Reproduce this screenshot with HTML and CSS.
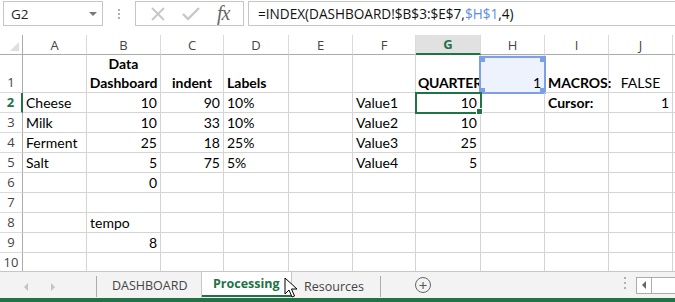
FILE: index.html
```html
<!DOCTYPE html>
<html lang="en">
<head>
    <meta charset="UTF-8">
    <title>Processing - Workbook</title>
    <link rel="stylesheet" href="styles.css">
</head>
<body>

<div class="formula-bar">
    <div class="name-box">
        <span>G2</span>
        <span class="name-arrow"></span>
    </div>
    <div class="grip"><i></i><i></i><i></i></div>
    <div class="fx-box">
        <svg class="fx-icon" width="16" height="16" viewBox="0 0 16 16">
            <path d="M2 2 L14 14 M14 2 L2 14" stroke="#c8c8c8" stroke-width="2" fill="none"/>
        </svg>
        <svg class="fx-icon" width="20" height="16" viewBox="0 0 20 16">
            <path d="M2 8 L7 13 L18 2" stroke="#c8c8c8" stroke-width="2.4" fill="none"/>
        </svg>
        <span class="fx-label">fx</span>
    </div>
    <div class="formula-input">=INDEX(DASHBOARD!$B$3:$E$7,<span class="ref">$H$1</span>,4)</div>
</div>

<div class="sheet" id="sheet">
    <!-- cells are built by the script below -->
</div>

<div class="tab-bar">
    <div class="tab-nav">
        <span class="nav-left"></span>
        <span class="nav-right"></span>
    </div>
    <div class="tab">DASHBOARD</div>
    <div class="tab active">Processing</div>
    <div class="tab last">Resources</div>
    <div class="add-sheet">+</div>
    <div class="tab-spacer"></div>
    <div class="grip small"><i></i><i></i><i></i></div>
    <div class="hscroll">
        <span class="hscroll-btn"><span class="nav-left dark"></span></span>
        <span class="hscroll-track"></span>
    </div>
    <svg class="pointer" width="14" height="22" viewBox="0 0 14 22">
        <path d="M1 1 L1 17 L5 13 L8 20 L10.5 19 L7.5 12 L13 12 Z" fill="#fff" stroke="#000" stroke-width="1"/>
    </svg>
</div>
<div class="status-bar"></div>

<script>
    // K is only a sliver at the right edge, its letter is out of view
    const cols = ['A', 'B', 'C', 'D', 'E', 'F', 'G', 'H', 'I', 'J', 'K'];

    // sheet content, row by row
    const rows = [
        { B: 'Data Dashboard', C: 'indent', D: 'Labels', G: 'QUARTER', H: '1', I: 'MACROS:', J: 'FALSE' },
        { A: 'Cheese', B: '10', C: '90', D: '10%', F: 'Value1', G: '10', I: 'Cursor:', J: '1' },
        { A: 'Milk', B: '10', C: '33', D: '10%', F: 'Value2', G: '10' },
        { A: 'Ferment', B: '25', C: '18', D: '25%', F: 'Value3', G: '25' },
        { A: 'Salt', B: '5', C: '75', D: '5%', F: 'Value4', G: '5' },
        { B: '0' },
        {},
        { B: 'tempo' },
        { B: '8' },
        {}
    ];

    // extra classes for formatted cells
    const formats = {
        B1: 'bold center wrap',
        C1: 'bold indent',
        D1: 'bold',
        G1: 'bold tight',
        I1: 'bold',
        J1: 'center',
        I2: 'bold',
        H1: 'ref-range',
        G2: 'active'
    };

    function addCell(sheet, cls, text) {
        const cell = document.createElement('div');
        cell.className = cls;
        if (text) {
            const span = document.createElement('span');
            span.textContent = text;
            cell.appendChild(span);
        }
        sheet.appendChild(cell);
    }

    function buildSheet() {
        const sheet = document.getElementById('sheet');

        addCell(sheet, 'corner', '');
        cols.forEach(c => {
            const label = c === 'K' ? '' : c;
            addCell(sheet, 'col-head' + (c === 'G' ? ' selected' : ''), label);
        });

        rows.forEach((row, i) => {
            const n = i + 1;
            addCell(sheet, 'row-head' + (n === 2 ? ' selected' : ''), String(n));
            cols.forEach(c => {
                const value = row[c] || '';
                let cls = 'cell';
                if (/^\d+$/.test(value)) cls += ' num';
                if (formats[c + n]) cls += ' ' + formats[c + n];
                addCell(sheet, cls, value);
            });
        });
    }

    buildSheet();
</script>

</body>
</html>
```

FILE: styles.css
```css
body {
    margin: 0;
    width: 675px;
    height: 302px;
    overflow: hidden;
    background-color: #fff;
    font-family: 'Open Sans', 'Noto Sans', sans-serif;
    position: relative;
}

/* formula bar */

.formula-bar {
    height: 35px;
    display: flex;
    align-items: flex-start;
    padding-top: 1px;
    box-sizing: border-box;
}

.name-box {
    margin-left: 3px;
    width: 100px;
    height: 25px;
    border: 1px solid #c6c6c6;
    box-sizing: border-box;
    display: flex;
    align-items: center;
    justify-content: space-between;
    padding: 0 5px 0 7px;
    font-size: 13.5px;
    color: #222;
}

.name-arrow {
    width: 0;
    height: 0;
    border-left: 4px solid transparent;
    border-right: 4px solid transparent;
    border-top: 4px solid #777;
}

.grip {
    width: 32px;
    height: 25px;
    display: flex;
    flex-direction: column;
    align-items: center;
    justify-content: center;
    gap: 2px;
}

.grip i {
    width: 2px;
    height: 2px;
    background-color: #b0b0b0;
}

.fx-box {
    width: 109px;
    height: 25px;
    border: 1px solid #c6c6c6;
    box-sizing: border-box;
    display: flex;
    align-items: center;
    padding-left: 14px;
    gap: 15px;
}

.fx-label {
    font-family: 'Liberation Serif', serif;
    font-style: italic;
    font-size: 20px;
    color: #666;
    margin-left: 1px;
    letter-spacing: -1px;
}

.formula-input {
    flex: 1;
    margin-left: 4px;
    height: 25px;
    border: 1px solid #c6c6c6;
    border-right: none;
    box-sizing: border-box;
    padding-left: 9px;
    font-size: 13.6px;
    line-height: 23px;
    color: #111;
}

.formula-input .ref {
    color: #5d8ee0;
}

/* grid */

.sheet {
    display: grid;
    grid-template-columns: 23px 64px 74px 63px 65px 64px 63px 65px 64px 64px 64px 64px;
    grid-template-rows: 20px 38px repeat(9, 20px);
    height: 236px;
    overflow: hidden;
    font-family: 'Lato', 'Open Sans', sans-serif;
    font-size: 14px;
    color: #000;
}

.sheet > div {
    box-sizing: border-box;
    position: relative;
    overflow: visible;
    white-space: nowrap;
}

.corner {
    border-right: 1px solid #ababab;
    border-bottom: 1px solid #ababab;
}

.corner::after {
    content: '';
    position: absolute;
    right: 3px;
    bottom: 3px;
    border-left: 9px solid transparent;
    border-bottom: 9px solid #dfdfdf;
}

.col-head,
.row-head {
    font-family: 'Open Sans', 'Noto Sans', sans-serif;
    font-size: 13px;
    color: #444;
    display: flex;
    align-items: center;
    justify-content: center;
}

.col-head {
    border-right: 1px solid #dadada;
    border-bottom: 1px solid #ababab;
}

.row-head {
    border-right: 1px solid #ababab;
    border-bottom: 1px solid #dadada;
    align-items: flex-end;
    padding-bottom: 1px;
}

.col-head.selected {
    background-color: #e1e1e1;
    color: #217346;
    font-weight: bold;
    border-bottom: 2px solid #217346;
}

.row-head.selected {
    color: #217346;
    font-weight: bold;
    border-right: 2px solid #217346;
}

.cell {
    border-right: 1px solid #d4d4d4;
    border-bottom: 1px solid #d4d4d4;
    display: flex;
    align-items: flex-end;
    padding: 0 3px 0 3px;
    line-height: 19px;
}

.cell.num {
    justify-content: flex-end;
}

.cell.bold {
    font-weight: bold;
}

.cell.center {
    justify-content: center;
    text-align: center;
}

.cell.wrap {
    white-space: normal;
}

.cell.indent {
    padding-left: 11px;
}

.cell.tight {
    padding: 0 1px 0 2px;
    letter-spacing: -0.2px;
}

.cell.active {
    outline: 2px solid #217346;
    outline-offset: -1px;
    z-index: 2;
}

.cell.active::after {
    content: '';
    position: absolute;
    right: -3px;
    bottom: -3px;
    width: 5px;
    height: 5px;
    background-color: #217346;
    border: 1px solid #fff;
}

.cell.ref-range {
    background-color: #eef2fc;
}

.cell.ref-range::before {
    content: '';
    position: absolute;
    left: -2px;
    top: 1px;
    right: -2px;
    bottom: -2px;
    border: 2px solid #7ba0e8;
    box-sizing: border-box;
    background:
        linear-gradient(#7ba0e8, #7ba0e8) left top / 4px 4px no-repeat,
        linear-gradient(#7ba0e8, #7ba0e8) right top / 4px 4px no-repeat,
        linear-gradient(#7ba0e8, #7ba0e8) left bottom / 4px 4px no-repeat,
        linear-gradient(#7ba0e8, #7ba0e8) right bottom / 4px 4px no-repeat;
}

.cell.ref-range span {
    position: relative;
}

/* sheet tabs */

.tab-bar {
    height: 26px;
    border-top: 1px solid #c6c6c6;
    background-color: #f3f3f3;
    display: flex;
    align-items: stretch;
    position: relative;
    font-size: 12.5px;
    color: #444;
}

.tab-nav {
    width: 97px;
    border-right: 1px solid #ababab;
    margin: 4px 0 1px 0;
    display: flex;
    align-items: center;
    padding-left: 24px;
    gap: 23px;
    box-sizing: border-box;
}

.nav-left,
.nav-right {
    width: 0;
    height: 0;
    border-top: 4px solid transparent;
    border-bottom: 4px solid transparent;
}

.nav-left {
    border-right: 4px solid #c4c4c4;
}

.nav-right {
    border-left: 4px solid #c4c4c4;
}

.nav-left.dark {
    border-right-color: #666;
}

.tab {
    padding: 0 15px 0 15px;
    display: flex;
    align-items: center;
    border-right: 1px solid #c6c6c6;
    width: 105px;
    box-sizing: border-box;
}

.tab.active {
    background-color: #fff;
    color: #217346;
    font-weight: bold;
    width: 90px;
    padding: 0 0 0 11px;
    border-bottom: 2px solid #217346;
    margin-bottom: 1px;
}

.tab.last {
    width: 89px;
    padding: 0 0 0 12px;
    border-right: 1px solid #ababab;
    margin: 4px 0 1px 0;
}

.add-sheet {
    width: 14px;
    height: 14px;
    margin: 5px 0 0 34px;
    border: 1px solid #666;
    border-radius: 50%;
    display: flex;
    align-items: center;
    justify-content: center;
    font-size: 15px;
    line-height: 14px;
    color: #555;
}

.tab-spacer {
    flex: 1;
}

.grip.small {
    width: 10px;
    height: 22px;
    gap: 3px;
    margin-right: 6px;
}

.hscroll {
    display: flex;
    align-items: center;
    width: 39px;
}

.hscroll-btn {
    width: 14px;
    height: 15px;
    border: 1px solid #ababab;
    background-color: #fff;
    display: flex;
    align-items: center;
    justify-content: center;
}

.hscroll-track {
    flex: 1;
    height: 15px;
    border-top: 1px solid #ababab;
    border-bottom: 1px solid #ababab;
    background-color: #fff;
}

.pointer {
    position: absolute;
    left: 284px;
    top: 5px;
}

.status-bar {
    height: 6px;
    background-color: #217346;
}
```
